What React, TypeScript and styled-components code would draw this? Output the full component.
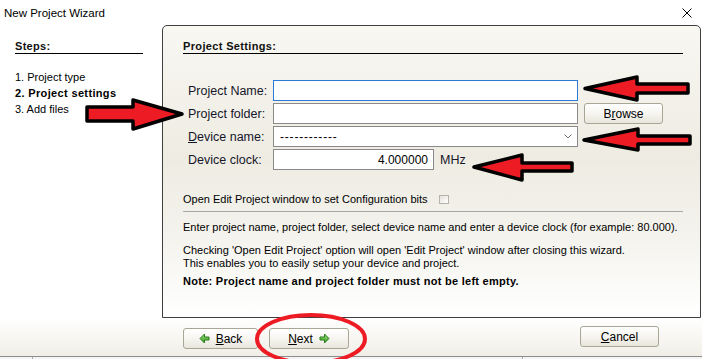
import styled, { createGlobalStyle } from "styled-components";

const GlobalStyle = createGlobalStyle`
  html, body {
    margin: 0;
    padding: 0;
    background: #fff;
  }
  body {
    font-family: "Liberation Sans", Arial, sans-serif;
    color: #111;
  }
`;

const Window = styled.div`
  position: relative;
  width: 702px;
  height: 359px;
  overflow: hidden;
  display: flex;
  flex-direction: column;
  background: #fff;
`;

const TitleBar = styled.div`
  height: 25px;
  flex: none;
  display: flex;
  align-items: center;
  justify-content: space-between;
  padding: 0 10px 0 4px;
  font-size: 11.5px;
  color: #000;
`;

const Body = styled.div`
  height: 293px;
  flex: none;
  display: flex;
`;

const Sidebar = styled.div`
  width: 162px;
  flex: none;
  box-sizing: border-box;
  padding: 15px 0 0 15px;
`;

const StepsHeading = styled.div`
  width: 128px;
  font-size: 11px;
  font-weight: bold;
  letter-spacing: 0.3px;
  line-height: 13px;
  border-bottom: 1px solid #000;
`;

const StepList = styled.div`
  margin-top: 15px;
`;

const Step = styled.div<{ $active?: boolean }>`
  font-size: 11px;
  line-height: 16px;
  font-weight: ${(p) => (p.$active ? "bold" : "normal")};
  letter-spacing: ${(p) => (p.$active ? "0.35px" : "normal")};
  color: #000;
`;

const Panel = styled.div`
  flex: 1;
  margin-right: 1px;
  box-sizing: border-box;
  border: 1px solid #3f3f3f;
  border-radius: 5px 5px 0 0;
  padding: 14px 17px 0 20px;
  background: linear-gradient(
    to bottom,
    #f8f7f2 0%,
    #eeece2 45%,
    #f3f2ec 70%,
    #ffffff 100%
  );
`;

const SectionTitle = styled.div`
  font-size: 11px;
  font-weight: bold;
  letter-spacing: 0.35px;
  line-height: 13px;
  border-bottom: 1px solid #000;
`;

const Form = styled.div`
  margin-top: 26px;
`;

const Row = styled.div`
  display: flex;
  align-items: center;
  height: 21px;
  margin-bottom: 2px;
`;

const Label = styled.div`
  width: 90px;
  flex: none;
  box-sizing: border-box;
  padding-left: 5px;
  font-size: 12.5px;
  color: #16162a;
`;

const TextBox = styled.input<{ $width: number; $focused?: boolean; $right?: boolean }>`
  width: ${(p) => p.$width}px;
  height: 21px;
  box-sizing: border-box;
  margin: 0;
  padding: 0 5px;
  border: 1px solid ${(p) => (p.$focused ? "#2b7bd6" : "#8a8a8a")};
  border-radius: 0;
  background: #fff;
  font-family: "Liberation Sans", Arial, sans-serif;
  font-size: 12px;
  color: #000;
  text-align: ${(p) => (p.$right ? "right" : "left")};
  outline: none;
`;

const Select = styled.div`
  width: 305px;
  height: 21px;
  box-sizing: border-box;
  border: 1px solid #8a8a8a;
  background: #fff;
  display: flex;
  align-items: center;
  justify-content: space-between;
  padding: 0 5px 0 6px;
  font-size: 12px;
  letter-spacing: 0.8px;
  color: #000;
`;

const Unit = styled.span`
  margin-left: 6px;
  font-size: 12.5px;
  color: #16162a;
`;

const Button = styled.div<{ $width: number }>`
  width: ${(p) => p.$width}px;
  height: 21px;
  box-sizing: border-box;
  flex: none;
  display: inline-flex;
  align-items: center;
  justify-content: center;
  gap: 6px;
  border: 1px solid #a9a696;
  border-radius: 3px;
  background: linear-gradient(to bottom, #ffffff 0%, #f6f5f0 50%, #e8e6dc 100%);
  font-size: 12px;
  color: #000;
`;

const BrowseButton = styled(Button)`
  margin-left: 6px;
`;

const Key = styled.span`
  text-decoration: underline;
`;

const CheckRow = styled.div`
  margin-top: 22px;
  display: flex;
  align-items: center;
  font-size: 11px;
  line-height: 14px;
  color: #000;
`;

const CheckBox = styled.span`
  width: 10px;
  height: 9px;
  box-sizing: border-box;
  margin-left: 11px;
  border: 1px solid #b5b3aa;
  background: linear-gradient(to bottom right, #e4e2da, #ffffff);
`;

const Separator = styled.div`
  margin-top: 5px;
  height: 1px;
  background: #a9a79f;
`;

const Desc = styled.p<{ $gap: number; $bold?: boolean; $lh?: number }>`
  margin: ${(p) => p.$gap}px 0 0;
  font-size: 11px;
  line-height: ${(p) => p.$lh ?? 13}px;
  font-weight: ${(p) => (p.$bold ? "bold" : "normal")};
  letter-spacing: ${(p) => (p.$bold ? "0.28px" : "normal")};
  color: #000;
`;

const Footer = styled.div`
  flex: 1;
  display: flex;
  flex-direction: column;
  background: linear-gradient(to bottom, #ffffff 0%, #f9f8f4 40%, #efede5 100%);
`;

const ButtonBar = styled.div`
  flex: 1;
  display: flex;
  align-items: flex-start;
  padding-left: 183px;
`;

const NavButton = styled(Button)<{ $top: number; $left?: number }>`
  margin-top: ${(p) => p.$top}px;
  margin-left: ${(p) => p.$left ?? 0}px;
`;

const CancelButton = styled(Button)`
  margin-top: 8px;
  margin-left: auto;
  margin-right: 43px;
`;

const StatusBar = styled.div`
  height: 2px;
  flex: none;
  display: flex;
  border-top: 1px solid #8c8c8c;
  background: #f4f4f4;
`;

const StatusCell = styled.div<{ $width: number }>`
  width: ${(p) => p.$width}px;
  border-right: 1px solid #b0b0b0;
`;

const Annotations = styled.svg`
  position: absolute;
  left: 0;
  top: 0;
  pointer-events: none;
`;

const GreenArrow = ({ dir }: { dir: "left" | "right" }) => (
  <svg width="11" height="11" viewBox="0 0 11 11">
    <defs>
      <linearGradient id={`ga-${dir}`} x1="0" y1="0" x2="0" y2="1">
        <stop offset="0" stopColor="#9be27c" />
        <stop offset="1" stopColor="#2e9a1c" />
      </linearGradient>
    </defs>
    <polygon
      points="1,4 5.5,4 5.5,1 10,5.5 5.5,10 5.5,7 1,7"
      fill={`url(#ga-${dir})`}
      stroke="#2b7a1d"
      strokeWidth="1"
      strokeLinejoin="round"
      transform={dir === "left" ? "translate(11,0) scale(-1,1)" : undefined}
    />
  </svg>
);

const App = () => {
  return (
    <>
      <GlobalStyle />
      <Window>
        <TitleBar>
          <span>New Project Wizard</span>
          <svg width="10" height="10" viewBox="0 0 10 10">
            <path d="M0.5 0.5 L9.5 9.5 M9.5 0.5 L0.5 9.5" stroke="#000" strokeWidth="1" />
          </svg>
        </TitleBar>
        <Body>
          <Sidebar>
            <StepsHeading>Steps:</StepsHeading>
            <StepList>
              <Step>1. Project type</Step>
              <Step $active>2. Project settings</Step>
              <Step>3. Add files</Step>
            </StepList>
          </Sidebar>
          <Panel>
            <SectionTitle>Project Settings:</SectionTitle>
            <Form>
              <Row>
                <Label>Project Name:</Label>
                <TextBox $width={305} $focused readOnly defaultValue="" />
              </Row>
              <Row>
                <Label>Project folder:</Label>
                <TextBox $width={305} readOnly defaultValue="" />
                <BrowseButton $width={79}>
                  <span>
                    B<Key>r</Key>owse
                  </span>
                </BrowseButton>
              </Row>
              <Row>
                <Label>
                  <Key>D</Key>evice name:
                </Label>
                <Select>
                  <span>------------</span>
                  <svg width="8" height="5" viewBox="0 0 8 5">
                    <path d="M0.5 0.5 L4 4 L7.5 0.5" stroke="#6d6d6d" strokeWidth="1" fill="none" />
                  </svg>
                </Select>
              </Row>
              <Row>
                <Label>Device clock:</Label>
                <TextBox $width={161} $right readOnly defaultValue="4.000000" />
                <Unit>MHz</Unit>
              </Row>
            </Form>
            <CheckRow>
              Open Edit Project window to set Configuration bits
              <CheckBox />
            </CheckRow>
            <Separator />
            <Desc $gap={9}>
              Enter project name, project folder, select device name and enter a device clock (for
              example: 80.000).
            </Desc>
            <Desc $gap={10} $lh={12.5}>
              Checking 'Open Edit Project' option will open 'Edit Project' window after closing this
              wizard.
              <br />
              This enables you to easily setup your device and project.
            </Desc>
            <Desc $gap={6} $bold>
              Note: Project name and project folder must not be left empty.
            </Desc>
          </Panel>
        </Body>
        <Footer>
          <ButtonBar>
            <NavButton $width={75} $top={10}>
              <GreenArrow dir="left" />
              <span>
                <Key>B</Key>ack
              </span>
            </NavButton>
            <NavButton $width={80} $top={10} $left={11}>
              <span>
                <Key>N</Key>ext
              </span>
              <GreenArrow dir="right" />
            </NavButton>
            <CancelButton $width={79}>
              <span>
                <Key>C</Key>ancel
              </span>
            </CancelButton>
          </ButtonBar>
          <StatusBar>
            <StatusCell $width={32} />
            <StatusCell $width={489} />
          </StatusBar>
        </Footer>

        <Annotations width="702" height="359" viewBox="0 0 702 359">
          <g fill="#ed1c24" stroke="#000" strokeWidth="3.5" strokeLinejoin="round">
            <polygon points="585,88.5 637,77 637,84 688,84 688,93 637,93 637,100" />
            <polygon points="584,140 638,129 638,136 690,136 690,144 638,144 638,150" />
            <polygon points="474,167 522,155 522,163 572,163 572,171 522,171 522,180" />
            <polygon points="182,114 133,100 133,107 87,107 87,121 133,121 133,129" />
          </g>
          <ellipse cx="311" cy="339" rx="54" ry="24" fill="none" stroke="#ed1c24" strokeWidth="4" />
        </Annotations>
      </Window>
    </>
  );
};

export default App;
